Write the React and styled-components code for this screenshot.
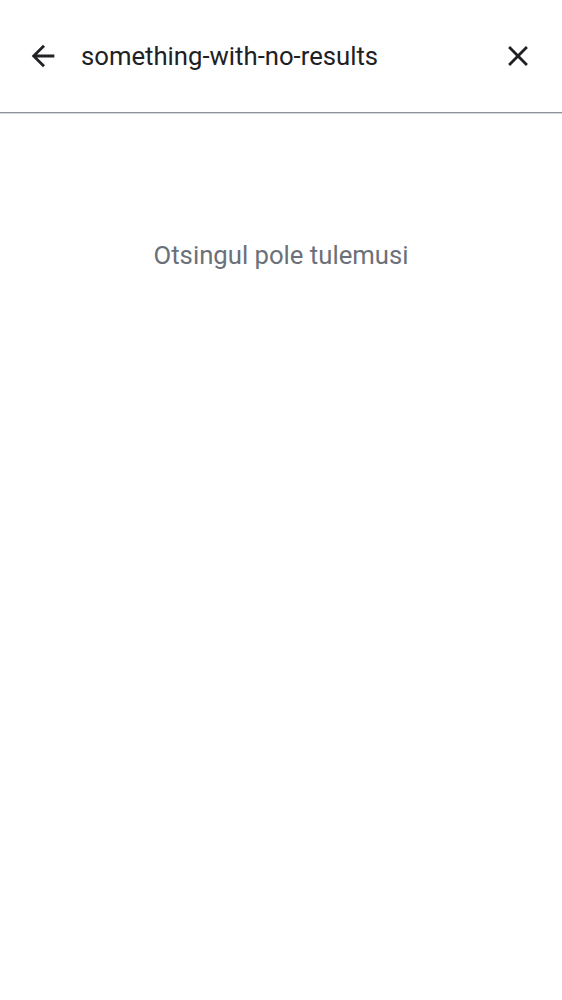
import React from "react";
import styled, { createGlobalStyle } from "styled-components";

const Global = createGlobalStyle`
  html, body { margin: 0; padding: 0; background: #ffffff; }
  body { font-family: Roboto, "Noto Sans", Arial, sans-serif; }
  * { box-sizing: border-box; }
`;

const Page = styled.div`
  width: 562px;
  min-height: 1000px;
  background: #ffffff;
  display: flex;
  flex-direction: column;
`;

const SearchBar = styled.header`
  height: 113px;
  display: flex;
  align-items: center;
  padding: 0 27px 1px 26px;
  border-bottom: 1px solid #8e9399;
  box-shadow: 0 1px 0 #d4d7da;
`;

const IconButton = styled.button`
  width: 34px;
  height: 34px;
  padding: 0;
  margin: 0;
  border: none;
  background: transparent;
  display: flex;
  align-items: center;
  justify-content: center;
  color: #202124;
  cursor: pointer;
  flex: none;
`;

const Query = styled.input`
  flex: 1;
  min-width: 0;
  margin-left: 21px;
  margin-right: 14px;
  border: none;
  outline: none;
  background: transparent;
  font-family: Roboto, "Noto Sans", Arial, sans-serif;
  font-size: 25.7px;
  color: #202124;
  padding: 0;
  height: 34px;
`;

const Empty = styled.p`
  margin: 0;
  padding-top: 127px;
  text-align: center;
  font-family: Roboto, "Noto Sans", Arial, sans-serif;
  font-size: 25.7px;
  color: #6b7079;
`;

const Icon = ({ d }) => (
  <svg width="34" height="34" viewBox="0 0 24 24" fill="currentColor" aria-hidden="true">
    <path d={d} />
  </svg>
);

export default function App() {
  return (
    <>
      <Global />
      <Page>
        <SearchBar>
          <IconButton aria-label="Tagasi">
            <Icon d="M20 11H7.83l5.59-5.59L12 4l-8 8 8 8 1.41-1.41L7.83 13H20v-2z" />
          </IconButton>
          <Query defaultValue="something-with-no-results" />
          <IconButton aria-label="Tühjenda">
            <Icon d="M19 6.41L17.59 5 12 10.59 6.41 5 5 6.41 10.59 12 5 17.59 6.41 19 12 13.41 17.59 19 19 17.59 13.41 12z" />
          </IconButton>
        </SearchBar>
        <Empty>Otsingul pole tulemusi</Empty>
      </Page>
    </>
  );
}
